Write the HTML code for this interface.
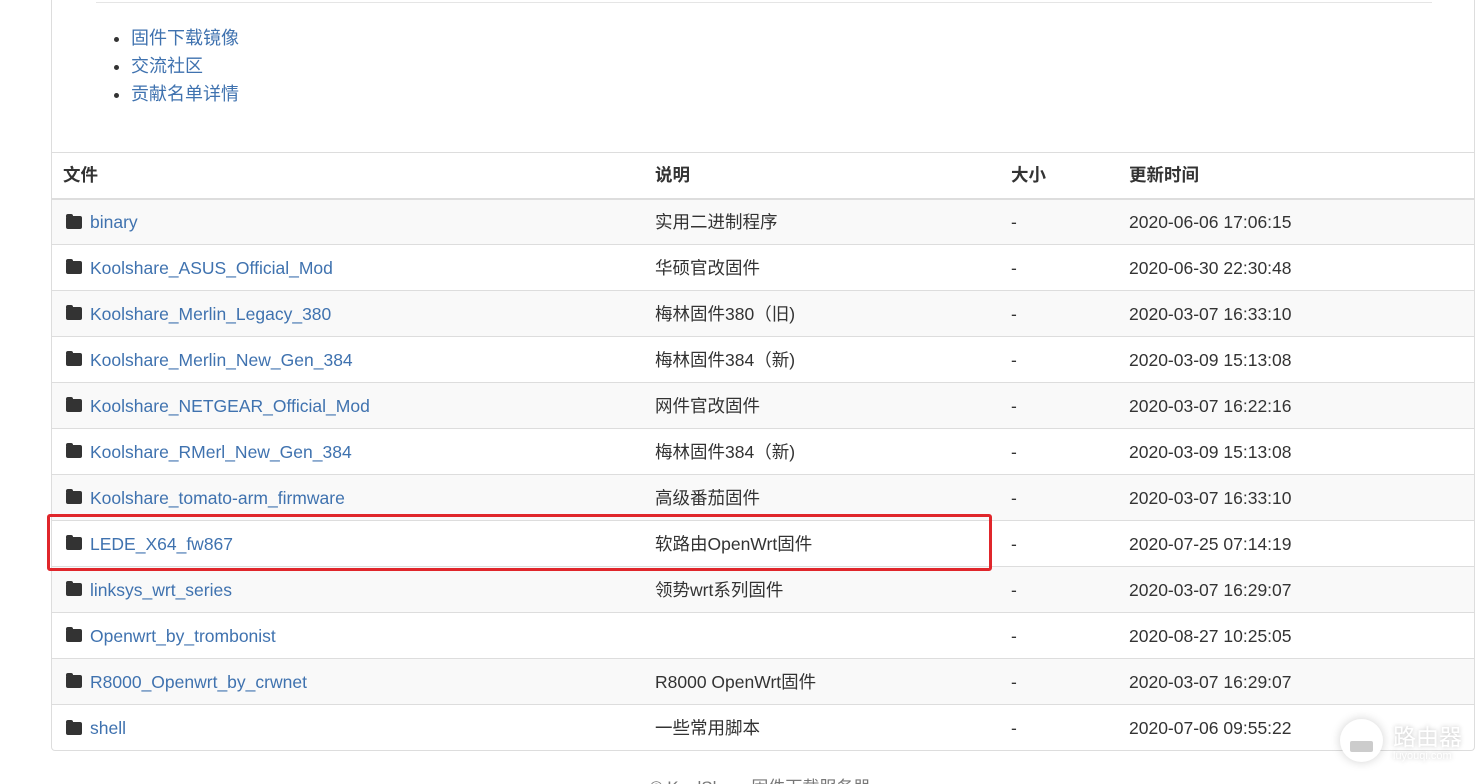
<!DOCTYPE html>
<html><head><meta charset="utf-8"><style>
*{box-sizing:border-box;margin:0;padding:0}
html,body{width:1480px;height:784px;overflow:hidden}
body{background:#fff;font-family:"Liberation Sans","Noto Sans CJK SC",sans-serif;font-size:17.5px;color:#333;position:relative}
a{color:#3f72af;text-decoration:none}
.hr{position:absolute;left:96px;top:2px;width:1336px;border-top:1px solid #e5e5e5}
.panel{position:absolute;left:51px;top:-2px;width:1424px;height:753px;border:1px solid #ddd;border-top:none;border-radius:0 0 4px 4px}
ul{position:absolute;left:131px;top:24px;list-style:disc;font-size:18px}
li{height:28px;line-height:28px}
li::marker{color:#333}
table{position:absolute;left:52px;top:152px;width:1422px;border-collapse:collapse}
th,td{text-align:left;height:46px;line-height:20px;padding:0 0 0 11px;border-top:1px solid #ddd;vertical-align:middle;white-space:nowrap}
th{font-weight:bold;border-bottom:2px solid #ddd}
td span.t{display:inline-block;height:20px;line-height:20px;vertical-align:middle}
tbody tr:nth-child(odd){background:#f9f9f9}
.ic{display:inline-block;width:16px;height:13px;background:#333;border-radius:2px;margin:0 8px 0 3px;vertical-align:middle;position:relative;top:-1px}
.ic:before{content:"";position:absolute;left:0;top:-2px;width:7px;height:3px;background:#333;border-radius:2px 2px 0 0}
.red{position:absolute;left:47px;top:514px;width:945px;height:57px;border:3px solid #e0262b;border-radius:3px}
.foot{position:absolute;left:650px;top:773px;font-size:17px;color:#777}
.circ{position:absolute;left:1340px;top:719px;width:43px;height:43px;border-radius:50%;background:#fff;box-shadow:0 0 10px rgba(0,0,0,.18)}
.circ:after{content:"";position:absolute;left:10px;top:22px;width:23px;height:11px;background:#ccc;border-radius:2px}
.wm{position:absolute;left:1393px;top:721px;color:#fff;font-size:23px;line-height:28px;text-shadow:0 0 5px rgba(0,0,0,.25);font-family:"Noto Sans CJK SC",sans-serif}
.wm small{display:block;font-size:11px;line-height:14px;font-family:"Liberation Sans",sans-serif}
</style></head><body>
<div class="hr"></div>
<div class="panel"></div>
<ul><li><a>固件下载镜像</a></li><li><a>交流社区</a></li><li><a>贡献名单详情</a></li></ul>
<table>
<colgroup><col style="width:592px"><col style="width:356px"><col style="width:118px"><col></colgroup>
<thead><tr><th>文件</th><th>说明</th><th>大小</th><th>更新时间</th></tr></thead>
<tbody>
<tr><td><span class="ic"></span><a>binary</a></td><td><span class="t">实用二进制程序</span></td><td>-</td><td>2020-06-06 17:06:15</td></tr>
<tr><td><span class="ic"></span><a>Koolshare_ASUS_Official_Mod</a></td><td><span class="t">华硕官改固件</span></td><td>-</td><td>2020-06-30 22:30:48</td></tr>
<tr><td><span class="ic"></span><a>Koolshare_Merlin_Legacy_380</a></td><td><span class="t">梅林固件380（旧)</span></td><td>-</td><td>2020-03-07 16:33:10</td></tr>
<tr><td><span class="ic"></span><a>Koolshare_Merlin_New_Gen_384</a></td><td><span class="t">梅林固件384（新)</span></td><td>-</td><td>2020-03-09 15:13:08</td></tr>
<tr><td><span class="ic"></span><a>Koolshare_NETGEAR_Official_Mod</a></td><td><span class="t">网件官改固件</span></td><td>-</td><td>2020-03-07 16:22:16</td></tr>
<tr><td><span class="ic"></span><a>Koolshare_RMerl_New_Gen_384</a></td><td><span class="t">梅林固件384（新)</span></td><td>-</td><td>2020-03-09 15:13:08</td></tr>
<tr><td><span class="ic"></span><a>Koolshare_tomato-arm_firmware</a></td><td><span class="t">高级番茄固件</span></td><td>-</td><td>2020-03-07 16:33:10</td></tr>
<tr><td><span class="ic"></span><a>LEDE_X64_fw867</a></td><td><span class="t">软路由OpenWrt固件</span></td><td>-</td><td>2020-07-25 07:14:19</td></tr>
<tr><td><span class="ic"></span><a>linksys_wrt_series</a></td><td><span class="t">领势wrt系列固件</span></td><td>-</td><td>2020-03-07 16:29:07</td></tr>
<tr><td><span class="ic"></span><a>Openwrt_by_trombonist</a></td><td></td><td>-</td><td>2020-08-27 10:25:05</td></tr>
<tr><td><span class="ic"></span><a>R8000_Openwrt_by_crwnet</a></td><td><span class="t">R8000 OpenWrt固件</span></td><td>-</td><td>2020-03-07 16:29:07</td></tr>
<tr><td><span class="ic"></span><a>shell</a></td><td><span class="t">一些常用脚本</span></td><td>-</td><td>2020-07-06 09:55:22</td></tr>
</tbody></table>
<div class="red"></div>
<div class="circ"></div>
<div class="wm">路由器<small>luyouqi.com</small></div>
<div class="foot">© KoolShare 固件下载服务器</div>
</body></html>
